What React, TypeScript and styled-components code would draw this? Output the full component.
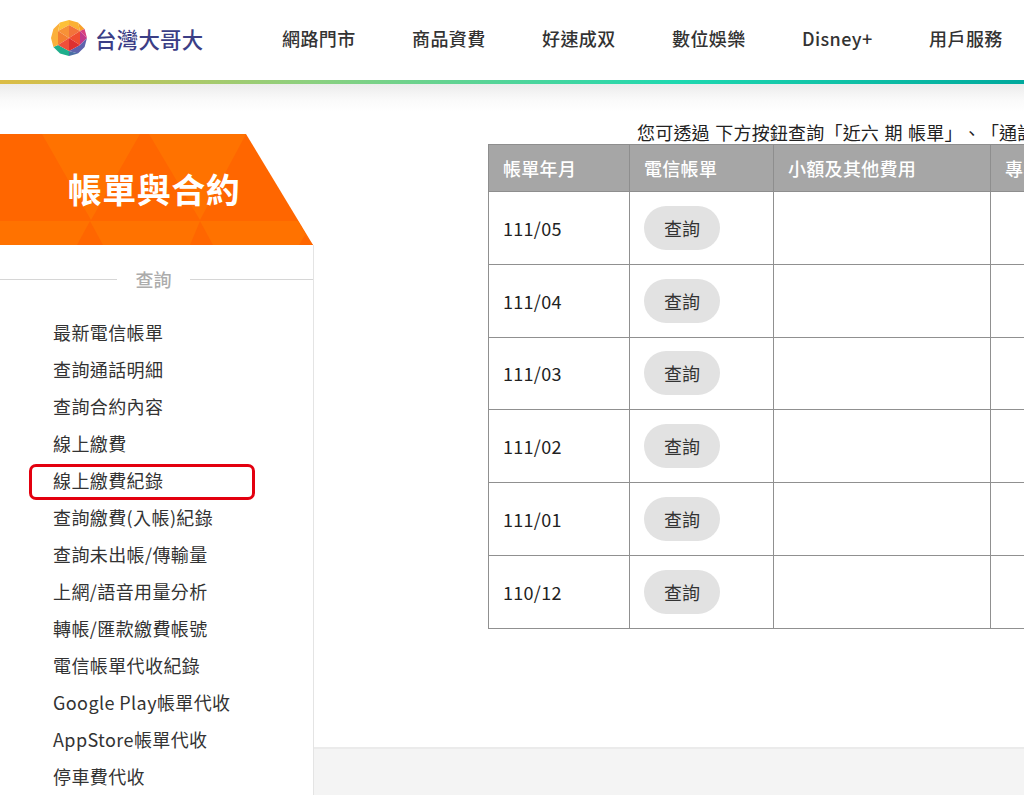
import React from 'react'
import styled, { createGlobalStyle } from 'styled-components'

const GlobalStyle = createGlobalStyle`
  html, body {
    margin: 0;
    padding: 0;
    height: 795px;
    overflow: hidden;
    background: #fff;
    font-family: "Noto Sans CJK TC", "Noto Sans", sans-serif;
    color: #333;
  }
  ul {
    margin: 0;
    padding: 0;
    list-style: none;
  }
`

const Page = styled.div`
  width: 1024px;
  height: 795px;
  display: flex;
  flex-direction: column;
  overflow: hidden;
`

const Header = styled.header`
  height: 80px;
  flex: none;
  display: flex;
  align-items: center;
  padding-left: 51px;
  padding-bottom: 4px;
  box-sizing: border-box;
  white-space: nowrap;
`

const Logo = styled.div`
  display: flex;
  align-items: center;
  gap: 8px;
  width: 231px;
  flex: none;
`

const LogoText = styled.span`
  font-size: 21.4px;
  font-weight: 500;
  letter-spacing: 0.3px;
  color: #3b3e86;
`

const Nav = styled.ul`
  display: flex;
  gap: 56.4px;
  font-size: 18px;
  font-weight: 500;
  letter-spacing: 0.4px;
  color: #333;
`

const RainbowBar = styled.div`
  height: 4px;
  flex: none;
  background: linear-gradient(90deg, #dcbc45 0%, #8dd07f 30%, #1fd8b0 66%, #00a99d 100%);
`

const Body = styled.div`
  flex: 1;
  display: flex;
  min-height: 0;
  background: linear-gradient(#ececec 0, #fafafa 16px, #fff 28px);
`

const Sidebar = styled.aside`
  width: 314px;
  flex: none;
  padding-top: 50px;
`

const Banner = styled.div`
  position: relative;
  height: 111px;
  display: flex;
  align-items: center;
  justify-content: center;
  padding-right: 6px;
  box-sizing: border-box;
`

const BannerArt = styled.svg`
  position: absolute;
  inset: 0;
  width: 313px;
  height: 111px;
`

const BannerTitle = styled.h1`
  position: relative;
  margin: 0 0 3px;
  font-size: 34px;
  font-weight: 700;
  color: #fff;
  letter-spacing: 0.5px;
`

const SidePanel = styled.div`
  border-right: 1px solid #e4e4e4;
  height: 560px;
  padding-top: 22px;
  box-sizing: border-box;
  background: #fff;
`

const SectionLabel = styled.div`
  display: flex;
  align-items: center;
  gap: 18.5px;
  height: 24px;
  margin-bottom: 23px;
  font-size: 18px;
  font-weight: 500;
  color: #acacac;
  &::before,
  &::after {
    content: '';
    height: 1px;
    background: #d6d6d6;
  }
  &::before {
    flex: 0 0 117px;
  }
  &::after {
    flex: 1;
  }
`

const MenuItem = styled.li<{ $marked?: boolean }>`
  position: relative;
  height: 37px;
  line-height: 37px;
  padding-left: 53px;
  font-size: 18px;
  letter-spacing: 0.4px;
  white-space: nowrap;
  color: #333;
  ${p =>
    p.$marked &&
    `&::after {
      content: '';
      position: absolute;
      left: 29px;
      top: 2px;
      width: 226px;
      height: 36px;
      box-sizing: border-box;
      border: 3px solid #e3000f;
      border-radius: 7px;
    }`}
`

const Main = styled.main`
  flex: 1;
  min-width: 0;
  display: flex;
  flex-direction: column;
`

const Content = styled.div`
  height: 663px;
  flex: none;
  padding: 37px 0 0 174px;
  box-sizing: border-box;
  overflow: hidden;
`

const Intro = styled.p`
  margin: 0 0 0 149px;
  height: 23px;
  line-height: 23px;
  font-size: 18px;
  letter-spacing: 0.2px;
  word-spacing: 1.2px;
  text-spacing-trim: space-all;
  color: #222;
  white-space: nowrap;
`

const BillTable = styled.table`
  table-layout: fixed;
  width: 700px;
  border-collapse: collapse;
  font-size: 18px;
`

const HeadCell = styled.th`
  height: 46px;
  padding: 0 14px;
  background: #a6a6a6;
  border: 1px solid #8e8e8e;
  color: #fff;
  font-size: 18px;
  font-weight: 500;
  letter-spacing: 0.3px;
  text-align: left;
  white-space: nowrap;
  overflow: hidden;
`

const Cell = styled.td`
  height: 71.8px;
  padding: 0 14px;
  border: 1px solid #909090;
  color: #222;
  letter-spacing: 0.3px;
  white-space: nowrap;
`

const QueryButton = styled.button`
  display: block;
  width: 76px;
  height: 44px;
  border: 0;
  border-radius: 22px;
  background: #e2e2e2;
  color: #333;
  font-family: inherit;
  font-size: 18px;
`

const Footer = styled.div`
  flex: 1;
  background: #f4f4f4;
  border-top: 2px solid #ebebeb;
`

const navItems = ['網路門市', '商品資費', '好速成双', '數位娛樂', 'Disney+', '用戶服務']

const menuItems = [
  '最新電信帳單',
  '查詢通話明細',
  '查詢合約內容',
  '線上繳費',
  '線上繳費紀錄',
  '查詢繳費(入帳)紀錄',
  '查詢未出帳/傳輸量',
  '上網/語音用量分析',
  '轉帳/匯款繳費帳號',
  '電信帳單代收紀錄',
  'Google Play帳單代收',
  'AppStore帳單代收',
  '停車費代收',
]

const months = ['111/05', '111/04', '111/03', '111/02', '111/01', '110/12']

const LogoMark: React.FC = () => (
  <svg width="36" height="36" viewBox="0 0 36 36">
    <polygon points="18,0 27,2.4 29,11 18,5" fill="#fbb034" />
    <polygon points="18,0 9,2.4 7,11 18,5" fill="#fdc038" />
    <polygon points="27,2.4 33.6,9 29,11" fill="#f9a02c" />
    <polygon points="33.6,9 36,18 29,11" fill="#d8407f" />
    <polygon points="36,18 29,25 29,11" fill="#c2388a" />
    <polygon points="36,18 33.6,27 27,33.6 18,31 29,25" fill="#5f63ad" />
    <polygon points="27,33.6 18,36 18,31" fill="#4b6fa5" />
    <polygon points="18,36 9,33.6 2.4,27 7,25 18,31" fill="#1fae8c" />
    <polygon points="2.4,27 0,18 2.4,9 9,2.4 7,11 7,25" fill="#fbb03b" />
    <polygon points="18,5 7,11 18,18" fill="#f79137" />
    <polygon points="18,5 29,11 18,18" fill="#f3733a" />
    <polygon points="7,11 7,25 18,18" fill="#f47f30" />
    <polygon points="29,11 29,25 18,18" fill="#f04e30" />
    <polygon points="7,25 18,31 18,18" fill="#f0503a" />
    <polygon points="29,25 18,31 18,18" fill="#dd3030" />
  </svg>
)

const BannerShape: React.FC = () => (
  <BannerArt viewBox="0 0 313 111">
    <polygon points="0,0 246,0 313,111 0,111" fill="#ff6600" />
    <polygon points="42,0 140,0 91,86" fill="#ff7200" />
    <polygon points="149,0 246,0 200,86" fill="#ff7200" />
    <polygon points="0,87 298,87 312,111 0,111" fill="#ff7200" />
    <polygon points="90,87 77,111 103,111" fill="#ff6600" />
    <polygon points="200,87 190,111 213,111" fill="#ff6600" />
    <polygon points="305,101 299,111 313,111" fill="#ff6600" />
  </BannerArt>
)

const App: React.FC = () => {
  return (
    <Page>
      <GlobalStyle />
      <Header>
        <Logo>
          <LogoMark />
          <LogoText>台灣大哥大</LogoText>
        </Logo>
        <Nav>
          {navItems.map(item => (
            <li key={item}>{item}</li>
          ))}
        </Nav>
      </Header>
      <RainbowBar />
      <Body>
        <Sidebar>
          <Banner>
            <BannerShape />
            <BannerTitle>帳單與合約</BannerTitle>
          </Banner>
          <SidePanel>
            <SectionLabel>查詢</SectionLabel>
            <ul>
              {menuItems.map(item => (
                <MenuItem key={item} $marked={item === '線上繳費紀錄'}>
                  {item}
                </MenuItem>
              ))}
            </ul>
          </SidePanel>
        </Sidebar>
        <Main>
          <Content>
            <Intro>您可透過 下方按鈕查詢「近六 期 帳單」、「通話明細」</Intro>
            <BillTable>
              <colgroup>
                <col style={{ width: 141 }} />
                <col style={{ width: 144 }} />
                <col style={{ width: 217 }} />
                <col />
              </colgroup>
              <thead>
                <tr>
                  <HeadCell>帳單年月</HeadCell>
                  <HeadCell>電信帳單</HeadCell>
                  <HeadCell>小額及其他費用</HeadCell>
                  <HeadCell>專案費用</HeadCell>
                </tr>
              </thead>
              <tbody>
                {months.map(month => (
                  <tr key={month}>
                    <Cell>{month}</Cell>
                    <Cell>
                      <QueryButton>查詢</QueryButton>
                    </Cell>
                    <Cell />
                    <Cell />
                  </tr>
                ))}
              </tbody>
            </BillTable>
          </Content>
          <Footer />
        </Main>
      </Body>
    </Page>
  )
}

export default App
